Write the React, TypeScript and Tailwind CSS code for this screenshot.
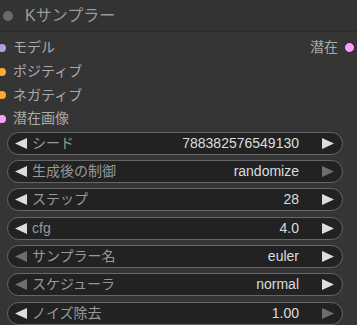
import React from "react";

type Widget = {
  label: string;
  value: string;
  left: boolean;
  right: boolean;
};

const inputs = [
  { label: "モデル", color: "bg-[#b39ddb]" },
  { label: "ポジティブ", color: "bg-[#ffa931]" },
  { label: "ネガティブ", color: "bg-[#ffa931]" },
  { label: "潜在画像", color: "bg-[#ff9cf9]" },
];

const widgets: Widget[] = [
  { label: "シード", value: "788382576549130", left: true, right: true },
  { label: "生成後の制御", value: "randomize", left: true, right: false },
  { label: "ステップ", value: "28", left: true, right: true },
  { label: "cfg", value: "4.0", left: true, right: true },
  { label: "サンプラー名", value: "euler", left: false, right: true },
  { label: "スケジューラ", value: "normal", left: false, right: true },
  { label: "ノイズ除去", value: "1.00", left: true, right: false },
];

function Arrow({ dir, active }: { dir: "left" | "right"; active: boolean }) {
  return (
    <svg width="12" height="11" viewBox="0 0 12 11" className="shrink-0">
      <polygon
        points={dir === "left" ? "12,0 12,11 0,5.5" : "0,0 0,11 12,5.5"}
        fill={active ? "#dddddd" : "#6e6e6e"}
      />
    </svg>
  );
}

export default function App() {
  return (
    <div
      className="w-[357px] h-[325px] overflow-hidden bg-[#353535] text-[14px]"
      style={{ fontFamily: '"Liberation Sans", "Noto Sans CJK JP", sans-serif' }}
    >
      {/* title */}
      <div className="h-[32px] flex items-center border-b border-[#2b2b2b] bg-[#333333]">
        <div className="w-[10px] h-[10px] rounded-full bg-[#6a6a6a] ml-[3px]" />
        <span className="ml-[12px] text-[16px] text-[#9a9a9a]">Kサンプラー</span>
      </div>

      {/* slots */}
      <div className="pt-[4px]">
        {inputs.map((s, i) => (
          <div key={s.label} className="h-[23.7px] flex items-center">
            <div className={`w-[8px] h-[8px] rounded-full -ml-[2px] ${s.color}`} />
            <span className="ml-[7px] text-[#aaaaaa]">{s.label}</span>
            {i === 0 && (
              <div className="ml-auto flex items-center">
                <span className="text-[#aaaaaa]">潜在</span>
                <div className="w-[11px] h-[11px] rounded-full bg-[#ff9cf9] border-[1.5px] border-[#2a1f2a] ml-[6px] mr-[2px]" />
              </div>
            )}
          </div>
        ))}
      </div>

      {/* widgets */}
      <div className="flex flex-col gap-[5.3px] mt-[1px] pl-[7px] pr-[14px]">
        {widgets.map((w) => (
          <div
            key={w.label}
            className="h-[23px] shrink-0 rounded-full border border-[#666666] bg-[#222222] flex items-center pl-[7px] pr-[8px]"
          >
            <Arrow dir="left" active={w.left} />
            <span className="ml-[5px] text-[#999999]">{w.label}</span>
            <span className="ml-auto text-[#dddddd]">{w.value}</span>
            <span className="ml-[23px]">
              <Arrow dir="right" active={w.right} />
            </span>
          </div>
        ))}
      </div>
    </div>
  );
}
